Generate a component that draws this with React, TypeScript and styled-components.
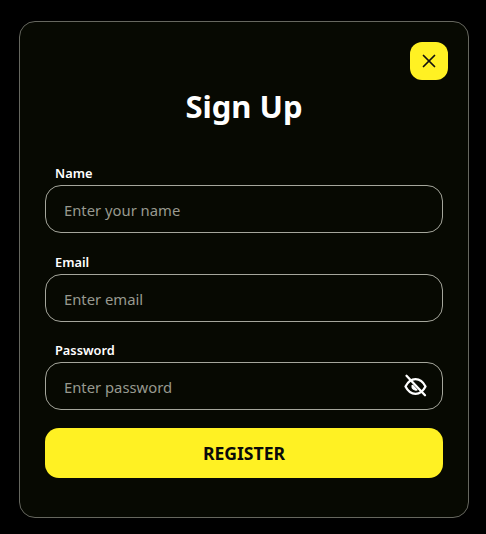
import React from "react";
import styled, { createGlobalStyle } from "styled-components";
import { X } from "lucide-react";

const GlobalStyle = createGlobalStyle`
  html, body {
    margin: 0;
    background: #000;
    font-family: "Noto Sans", "Open Sans", sans-serif;
  }
`;

const Page = styled.div`
  width: 486px;
  height: 534px;
  padding: 21px 17px 16px 19px;
  box-sizing: border-box;
  background: #000;
`;

const Card = styled.form`
  position: relative;
  box-sizing: border-box;
  width: 450px;
  height: 497px;
  padding: 63px 25px 0 25px;
  background: #070902;
  border: 1px solid #66675f;
  border-radius: 16px;
  display: flex;
  flex-direction: column;
`;

const CloseButton = styled.button`
  position: absolute;
  top: 20px;
  right: 20px;
  width: 38px;
  height: 38px;
  padding: 0;
  border: 0;
  border-radius: 12px;
  background: #fff123;
  color: #111;
  display: flex;
  align-items: center;
  justify-content: center;
`;

const Title = styled.h1`
  margin: 0 0 37px;
  color: #fff;
  font-size: 31px;
  line-height: 42px;
  font-weight: 700;
  text-align: center;
`;

const Field = styled.div`
  display: flex;
  flex-direction: column;
  margin-bottom: ${({ $gap }: { $gap: number }) => $gap}px;
`;

const Label = styled.label`
  margin: 0 0 3px 10px;
  color: #fff;
  font-size: 12.8px;
  line-height: 18px;
  font-weight: 600;
`;

const InputBox = styled.div`
  box-sizing: border-box;
  height: 48px;
  padding: 0 14px 0 18px;
  border: 1px solid #a5a69c;
  border-radius: 16px;
  display: flex;
  align-items: center;
  justify-content: space-between;
`;

const Input = styled.input`
  flex: 1;
  min-width: 0;
  padding: 1px 0 0;
  border: 0;
  outline: 0;
  background: transparent;
  color: #fff;
  font-family: inherit;
  font-size: 14.8px;

  &::placeholder {
    color: #98998f;
    opacity: 1;
  }
`;

const EyeButton = styled.span`
  display: flex;
  color: #fff;
`;

const Submit = styled.button`
  height: 50px;
  margin-top: -1px;
  border: 0;
  border-radius: 14px;
  background: #fff123;
  color: #0a0a0a;
  font-family: inherit;
  font-size: 17.6px;
  font-weight: 700;
`;

function EyeSlash() {
  return (
    <svg width="24" height="24" viewBox="0 0 24 24" fill="none" stroke="currentColor" strokeWidth="2.3" strokeLinecap="round" strokeLinejoin="round">
      <path d="M1.5 12.5C4 7.6 7.5 5.2 11.5 5.2s7.5 2.4 10 7.3c-2.5 4.9-6 7.3-10 7.3s-7.5-2.4-10-7.3Z" />
      <path d="M2.5 1.8l18.5 19.4" />
      <path d="M8 11.5c-.4 3 2.2 5.2 5 4.5L8.8 11.4Z" fill="currentColor" strokeWidth="1.2" />
    </svg>
  );
}

export default function App() {
  return (
    <Page>
      <GlobalStyle />
      <Card>
        <CloseButton type="button" aria-label="Close">
          <X size={22} strokeWidth={1.9} />
        </CloseButton>
        <Title>Sign Up</Title>
        <Field $gap={20}>
          <Label>Name</Label>
          <InputBox>
            <Input placeholder="Enter your name" />
          </InputBox>
        </Field>
        <Field $gap={19}>
          <Label>Email</Label>
          <InputBox>
            <Input placeholder="Enter email" />
          </InputBox>
        </Field>
        <Field $gap={19}>
          <Label>Password</Label>
          <InputBox>
            <Input placeholder="Enter password" />
            <EyeButton>
              <EyeSlash />
            </EyeButton>
          </InputBox>
        </Field>
        <Submit type="button">REGISTER</Submit>
      </Card>
    </Page>
  );
}
